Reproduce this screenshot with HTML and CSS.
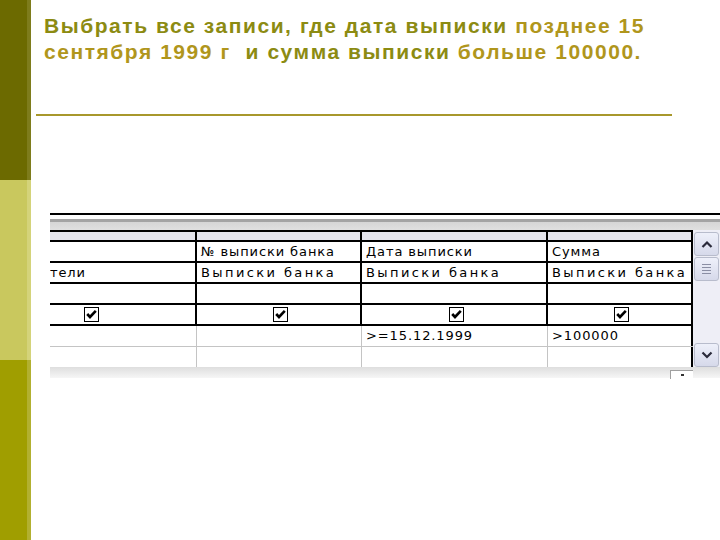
FILE: index.html
```html
<!DOCTYPE html>
<html lang="ru">
<head>
<meta charset="utf-8">
<link rel="stylesheet" href="styles.css">
</head>
<body>
<div class="page">
  <div class="sidebar">
    <div class="sb sb-top"></div>
    <div class="sb sb-mid"></div>
    <div class="sb sb-bot"></div>
  </div>
  <div class="main">
    <h1 class="title"><span class="ol">Выбрать все записи, где дата выписки</span> <span class="gd">позднее 15</span><br><span class="gd">сентября 1999 г</span>&nbsp; <span class="ol">и сумма выписки</span> <span class="gd">больше 100000.</span></h1>
    <div class="rule"></div>
    <div class="grid">
      <div class="topline"></div>
      <div class="gap"></div>
      <div class="band"></div>
      <div class="body">
        <div class="cols">
          <div class="row hdrsel b">
            <div class="c c1"></div><div class="c c2"></div><div class="c c3"></div><div class="c c4"></div>
          </div>
          <div class="row b">
            <div class="c c1"></div><div class="c c2">№ выписки банка</div><div class="c c3">Дата выписки</div><div class="c c4">Сумма</div>
          </div>
          <div class="row b">
            <div class="c c1">тели</div><div class="c c2 wide">Выписки банка</div><div class="c c3 wide">Выписки банка</div><div class="c c4 wide">Выписки банка</div>
          </div>
          <div class="row b">
            <div class="c c1"></div><div class="c c2"></div><div class="c c3"></div><div class="c c4"></div>
          </div>
          <div class="row b chk">
            <div class="c c1"><span class="cb first"><svg viewBox="0 0 15 15" width="15" height="15"><rect x="0.5" y="0.5" width="14" height="14" fill="#fff" stroke="#000"/><path d="M3.2 7 L6 10 L11.8 3.8" fill="none" stroke="#000" stroke-width="2.6"/></svg></span></div>
            <div class="c c2 ctr"><span class="cb"><svg viewBox="0 0 15 15" width="15" height="15"><rect x="0.5" y="0.5" width="14" height="14" fill="#fff" stroke="#000"/><path d="M3.2 7 L6 10 L11.8 3.8" fill="none" stroke="#000" stroke-width="2.6"/></svg></span></div>
            <div class="c c3 ctr"><span class="cb"><svg viewBox="0 0 15 15" width="15" height="15"><rect x="0.5" y="0.5" width="14" height="14" fill="#fff" stroke="#000"/><path d="M3.2 7 L6 10 L11.8 3.8" fill="none" stroke="#000" stroke-width="2.6"/></svg></span></div>
            <div class="c c4 ctr"><span class="cb"><svg viewBox="0 0 15 15" width="15" height="15"><rect x="0.5" y="0.5" width="14" height="14" fill="#fff" stroke="#000"/><path d="M3.2 7 L6 10 L11.8 3.8" fill="none" stroke="#000" stroke-width="2.6"/></svg></span></div>
          </div>
          <div class="row g">
            <div class="c c1"></div><div class="c c2"></div><div class="c c3">&gt;=15.12.1999</div><div class="c c4">&gt;100000</div>
          </div>
          <div class="row g last">
            <div class="c c1"></div><div class="c c2"></div><div class="c c3"></div><div class="c c4"></div>
          </div>
        </div>
        <div class="scroll">
          <div class="sbtn"><svg viewBox="0 0 12 8" width="12" height="8"><path d="M1.5 7 L6 2.5 L10.5 7" fill="none" stroke="#2a2a3a" stroke-width="2.2"/></svg></div>
          <div class="thumb"><span></span><span></span><span></span><span></span></div>
          <div class="track"></div>
          <div class="sbtn"><svg viewBox="0 0 12 8" width="12" height="8"><path d="M1.5 1.5 L6 6 L10.5 1.5" fill="none" stroke="#2a2a3a" stroke-width="2.2"/></svg></div>
        </div>
      </div>
      <div class="foot"><div class="tab"><span></span></div></div>
    </div>
  </div>
</div>
</body>
</html>
```

FILE: styles.css
```css
html, body {
  margin: 0;
  padding: 0;
  background: #ffffff;
}
.page {
  display: flex;
  width: 720px;
  height: 540px;
  overflow: hidden;
}
.sidebar {
  width: 31px;
  flex: none;
  display: flex;
  flex-direction: column;
}
.sb {
  height: 180px;
  box-sizing: border-box;
  border-right: 4px solid;
}
.sb-top { background: #6c6a00; border-right-color: #7e7c1c; }
.sb-mid { background: #c9c85e; border-right-color: #d4d37a; }
.sb-bot { background: #a09e00; border-right-color: #b2b030; }

.main {
  flex: 1;
  min-width: 0;
}
.title {
  margin: 13px 0 0 13px;
  font-family: "Liberation Sans", Arial, sans-serif;
  font-weight: bold;
  font-size: 21px;
  line-height: 26px;
  letter-spacing: 1.55px;
  white-space: nowrap;
}
.ol { color: #8c8b12; }
.gd { color: #b0961c; }

.rule {
  margin: 49px 0 0 5px;
  width: 636px;
  height: 2px;
  background: #a8982c;
}

.grid {
  margin: 97px 0 0 19px;
  font-family: "DejaVu Sans", Verdana, sans-serif;
  font-size: 13px;
  color: #000;
}
.topline { height: 2px; background: #000; }
.gap { height: 4px; background: #fff; }
.band {
  height: 11px;
  background: linear-gradient(#a4a4a4 0, #a4a4a4 3px, #d6d6d6 3px, #e0e0e0 11px);
}
.body {
  display: flex;
}
.cols {
  width: 643px;
  flex: none;
  border-top: 2px solid #000;
}
.row {
  display: flex;
  height: 19px;
  border-bottom: 2px solid #000;
}
.row.hdrsel {
  height: 8px;
  background: #e4e4ec;
}
.row.g {
  border-bottom: 1px solid #c4c4c4;
  height: 20px;
}
.row.g.last {
  border-bottom: none;
  height: 20px;
}
.c {
  box-sizing: border-box;
  padding-left: 4px;
  line-height: 19px;
  white-space: nowrap;
  overflow: hidden;
  letter-spacing: 0.9px;
}
.c.wide { letter-spacing: 2.4px; }
.c1 { width: 147px; border-right: 2px solid #000; padding-left: 0; }
.c2 { width: 165px; border-right: 2px solid #000; }
.c3 { width: 186px; border-right: 2px solid #000; }
.c4 { width: 145px; border-right: 2px solid #000; }
.row.g .c1 { border-right: 1px solid #c4c4c4; width: 147px; }
.row.g .c2 { border-right: 1px solid #c4c4c4; width: 165px; }
.row.g .c3 { border-right: 1px solid #c4c4c4; width: 186px; }
.row.chk .c { display: flex; align-items: center; }
.ctr { justify-content: center; }
.cb { display: block; width: 15px; height: 15px; }
.cb svg { display: block; }
.cb.first { margin-left: 34px; }

.scroll {
  width: 27px;
  flex: none;
  background: #eeeef6;
  display: flex;
  flex-direction: column;
  padding: 2px 1px 0 1px;
  box-sizing: border-box;
  gap: 1px;
}
.sbtn, .thumb {
  height: 24px;
  box-sizing: border-box;
  border: 1px solid #b8bccc;
  border-radius: 3px;
  background: linear-gradient(#eef0fa, #d6d9ea);
  display: flex;
  align-items: center;
  justify-content: center;
}
.thumb {
  flex-direction: column;
  gap: 2px;
}
.thumb span {
  display: block;
  width: 9px;
  height: 1px;
  background: #8a8ea4;
}
.track { flex: 1; height: 56px; }

.foot {
  height: 11px;
  background: linear-gradient(#dedede, #f6f6f6);
  position: relative;
}
.tab {
  position: absolute;
  left: 620px;
  top: 3px;
  width: 22px;
  height: 8px;
  background: #fff;
  border-top: 1px solid #a0a0a0;
  border-left: 1px solid #a0a0a0;
}
.tab span {
  position: absolute;
  left: 10px;
  top: 3px;
  width: 3px;
  height: 2px;
  background: #333;
}
```
